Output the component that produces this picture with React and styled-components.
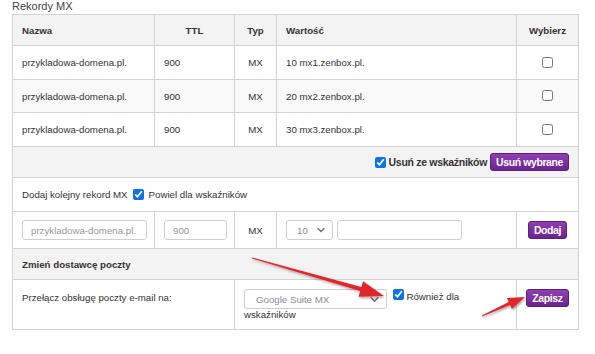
import React from "react";
import styled, { createGlobalStyle } from "styled-components";
import { ChevronDown } from "lucide-react";

const GlobalStyle = createGlobalStyle`
  html, body {
    margin: 0;
    padding: 0;
    background: #fff;
  }
  body {
    font-family: "Liberation Sans", Arial, sans-serif;
    font-size: 11px;
    color: #333;
  }
`;

const records = [
  { name: "przykladowa-domena.pl.", ttl: 900, type: "MX", value: "10 mx1.zenbox.pl." },
  { name: "przykladowa-domena.pl.", ttl: 900, type: "MX", value: "20 mx2.zenbox.pl." },
  { name: "przykladowa-domena.pl.", ttl: 900, type: "MX", value: "30 mx3.zenbox.pl." },
];

const Page = styled.div`
  position: relative;
  padding: 0 17px 0 12px;
  width: 595px;
  height: 354px;
  box-sizing: border-box;
`;

const Caption = styled.div`
  height: 14px;
  line-height: 13px;
  color: #444;
  font-size: 11px;
`;

const Table = styled.table`
  width: 566px;
  table-layout: fixed;
  border-collapse: collapse;
  border: 1px solid #d3d3d3;
  font-size: 9.7px;
`;

const Th = styled.th`
  height: 30px;
  padding: 0 9px;
  background: #f3f3f3;
  border: 1px solid #d3d3d3;
  font-weight: bold;
  text-align: ${(p) => p.$align || "left"};
  color: #333;
`;

const Row = styled.tr`
  background: ${(p) => (p.$bg ? p.$bg : "#fff")};
`;

const Td = styled.td`
  height: ${(p) => p.$h || 33}px;
  padding: ${(p) => (p.$top ? "9px 9px 0" : "0 9px")};
  border: 1px solid #d3d3d3;
  text-align: ${(p) => p.$align || "left"};
  vertical-align: ${(p) => (p.$top ? "top" : "middle")};
  font-weight: ${(p) => (p.$bold ? "bold" : "normal")};
  box-sizing: border-box;
`;

const Box = styled.input.attrs({ type: "checkbox" })`
  width: 11px;
  height: 11px;
  margin: 0;
  vertical-align: -1px;
  accent-color: #0b75e6;
`;

const Inline = styled.span`
  display: inline-flex;
  align-items: center;
  gap: ${(p) => p.$gap || 5}px;
`;

const BoldLabel = styled.span`
  font-family: "Liberation Sans", Arial, sans-serif;
  font-weight: bold;
  font-size: 10.5px;
  letter-spacing: -0.3px;
  color: #333;
`;

const Button = styled.button`
  height: 18px;
  padding: 0 5px;
  border: 1px solid #5d1d7a;
  border-radius: 3px;
  background: linear-gradient(#8f3fb3, #6c2490);
  color: #fff;
  font-family: "Liberation Sans", Arial, sans-serif;
  font-weight: bold;
  font-size: 10.5px;
  letter-spacing: -0.4px;
  line-height: 16px;
  cursor: pointer;
  vertical-align: middle;
`;

const TextInput = styled.input`
  width: ${(p) => p.$w}px;
  height: 20px;
  box-sizing: border-box;
  border: 1px solid #cfcfcf;
  border-radius: 3px;
  padding: 0 8px;
  font-family: "Liberation Sans", Arial, sans-serif;
  font-size: 9.7px;
  color: #999;
  vertical-align: middle;
`;

const SelectWrap = styled.span`
  position: relative;
  display: inline-block;
  vertical-align: middle;
  svg {
    position: absolute;
    right: 6px;
    top: 4px;
    pointer-events: none;
    color: #777;
  }
`;

const Select = styled.select`
  appearance: none;
  width: ${(p) => p.$w}px;
  height: 20px;
  box-sizing: border-box;
  border: 1px solid #cfcfcf;
  border-radius: 3px;
  padding: 0 0 0 ${(p) => p.$pl || 8}px;
  background: #fff;
  font-family: "Liberation Sans", Arial, sans-serif;
  font-size: 9.7px;
  color: #8a8a9a;
  display: block;
`;

const Note = styled.span`
  vertical-align: 2px;
`;

const Arrows = styled.svg`
  position: absolute;
  left: 0;
  top: 0;
  pointer-events: none;
`;

const App = () => {
  return (
    <>
      <GlobalStyle />
      <Page>
        <Caption>Rekordy MX</Caption>
        <Table>
          <colgroup>
            <col style={{ width: 142 }} />
            <col style={{ width: 80 }} />
            <col style={{ width: 42 }} />
            <col style={{ width: 240 }} />
            <col style={{ width: 62 }} />
          </colgroup>
          <thead>
            <tr>
              <Th>Nazwa</Th>
              <Th $align="center">TTL</Th>
              <Th $align="center">Typ</Th>
              <Th>Wartość</Th>
              <Th $align="center">Wybierz</Th>
            </tr>
          </thead>
          <tbody>
            {records.map((r, i) => (
              <Row key={i} $bg={i === 1 ? "#f9f9f9" : null}>
                <Td $h={i === 1 ? 33 : 34}>{r.name}</Td>
                <Td>{r.ttl}</Td>
                <Td $align="center">{r.type}</Td>
                <Td>{r.value}</Td>
                <Td $align="center">
                  <Box />
                </Td>
              </Row>
            ))}
            <Row $bg="#f3f3f3">
              <Td colSpan={5} $align="right" $h={31}>
                <Inline $gap={3}>
                  <Box defaultChecked />
                  <BoldLabel>Usuń ze wskaźników</BoldLabel>
                  <Button>Usuń wybrane</Button>
                </Inline>
              </Td>
            </Row>
            <Row>
              <Td colSpan={5} $h={34}>
                <Inline>
                  Dodaj kolejny rekord MX <Box defaultChecked /> Powiel dla wskaźników
                </Inline>
              </Td>
            </Row>
            <Row>
              <Td $h={37}>
                <TextInput $w={125} defaultValue="przykladowa-domena.pl." />
              </Td>
              <Td>
                <TextInput $w={63} defaultValue="900" />
              </Td>
              <Td $align="center">MX</Td>
              <Td>
                <Inline $gap={4}>
                  <SelectWrap>
                    <Select $w={47} $pl={10} defaultValue="10">
                      <option>10</option>
                      <option>20</option>
                      <option>30</option>
                    </Select>
                    <ChevronDown size={12} strokeWidth={3} />
                  </SelectWrap>
                  <TextInput $w={125} />
                </Inline>
              </Td>
              <Td $align="center">
                <Button>Dodaj</Button>
              </Td>
            </Row>
            <Row $bg="#f3f3f3">
              <Td colSpan={5} $bold $h={31}>
                Zmień dostawcę poczty
              </Td>
            </Row>
            <Row>
              <Td colSpan={2} $top $h={50}>
                <div style={{ marginTop: 3 }}>Przełącz obsługę poczty e-mail na:</div>
              </Td>
              <Td colSpan={2} $top>
                <SelectWrap>
                  <Select $w={143} $pl={11} defaultValue="Google Suite MX">
                    <option>Google Suite MX</option>
                    <option>Zenbox MX</option>
                  </Select>
                  <ChevronDown size={13} strokeWidth={3} />
                </SelectWrap>{" "}
                <Box defaultChecked style={{ marginLeft: 3, verticalAlign: 2 }} />{" "}
                <Note>Również dla wskaźników</Note>
              </Td>
              <Td $align="center" $top>
                <Button>Zapisz</Button>
              </Td>
            </Row>
          </tbody>
        </Table>
        <Arrows width="595" height="354" viewBox="0 0 595 354">
          <defs>
            <filter id="sh" x="-20%" y="-20%" width="140%" height="140%">
              <feDropShadow dx="1" dy="1.5" stdDeviation="1.2" floodColor="#000" floodOpacity="0.35" />
            </filter>
          </defs>
          <g fill="#e2282a" filter="url(#sh)">
            <polygon points="252.1,257.4 361.4,287.1 363,281.3 384,296 358.6,296.7 360.2,290.9 251.9,258.6" />
            <polygon points="481.8,315.6 508.7,302.1 506.9,298.1 525,297 511.9,309.1 510.1,305.1 482.2,316.4" />
          </g>
        </Arrows>
      </Page>
    </>
  );
};

export default App;
